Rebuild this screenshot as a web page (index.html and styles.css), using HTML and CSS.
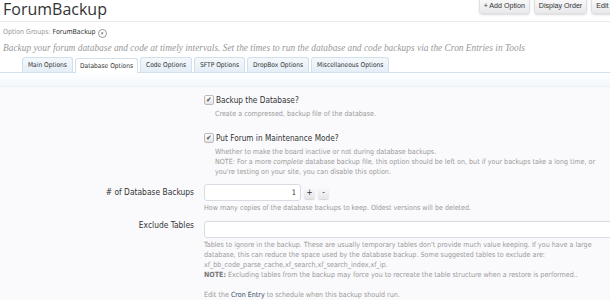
FILE: index.html
```html
<!DOCTYPE html>
<html lang="en">
<head>
  <meta charset="UTF-8" />
  <title>ForumBackup</title>
  <link rel="stylesheet" href="styles.css">
</head>
<body>
<div class="page">

 <div class="title-bar">
  <h1>ForumBackup</h1>
  <div class="top-ctrls">
    <a class="btn">+ Add Option</a>
    <a class="btn">Display Order</a>
    <a class="btn">Edit Option Group</a>
  </div>
 </div>

 <div class="breadcrumb">Option Groups: <b>ForumBackup</b> <span class="pop">&#9662;</span></div>
 <p class="group-desc">Backup your forum database and code at timely intervals. Set the times to run the database and code backups via the Cron Entries in Tools</p>

 <!-- TABS -->
 <ul class="tabs">
  <li>Main Options</li>
  <li class="active">Database Options</li>
  <li>Code Options</li>
  <li>SFTP Options</li>
  <li>DropBox Options</li>
  <li>Miscellaneous Options</li>
 </ul>
 <div class="tab-foot"></div>

 <div class="form">
  <div class="row row-check">
    <div class="label"></div>
    <div class="ctrl">
      <label class="check"><span class="box">&#10004;</span> Backup the Database?</label>
      <p class="hint">Create a compressed, backup file of the database.</p>
    </div>
  </div>

  <div class="row row-check2">
    <div class="label"></div>
    <div class="ctrl">
      <label class="check"><span class="box">&#10004;</span> Put Forum in Maintenance Mode?</label>
      <p class="hint">Whether to make the board inactive or not during database backups.<br>
      NOTE: For a more <i>complete</i> database backup file, this option should be left on, but if your backups take a long time, or you're testing on your site, you can disable this option.</p>
    </div>
  </div>

  <div class="row row-input">
    <div class="label field-label"># of Database Backups</div>
    <div class="ctrl">
      <div class="spin">
        <input class="txt num" type="text" value="1">
        <span class="spin-btn">+</span>
        <span class="spin-btn">-</span>
      </div>
      <p class="hint hint-flush">How many copies of the database backups to keep. Oldest versions will be deleted.</p>
    </div>
  </div>

  <div class="row">
    <div class="label field-label">Exclude Tables</div>
    <div class="ctrl">
      <input class="txt wide" type="text" value="">
      <p class="hint hint-flush">Tables to ignore in the backup. These are usually temporary tables don't provide much value keeping. If you have a large database, this can reduce the space used by the database backup. Some suggested tables to exclude are:<br>
      xf_bb_code_parse_cache,xf_search,xf_search_index,xf_ip.<br>
      <b>NOTE:</b> Excluding tables from the backup may force you to recreate the table structure when a restore is performed..</p>
      <p class="hint hint-flush hint-gap">Edit the <a class="lnk">Cron Entry</a> to schedule when this backup should run.</p>
    </div>
  </div>
 </div>

</div>
</body>
</html>
```

FILE: styles.css
```css
body {
  margin: 0;
  background: #fff;
  font-family: "DejaVu Sans Condensed", "DejaVu Sans", Tahoma, sans-serif;
  color: #333;
  overflow: hidden;
}
.page {
  width: 658px;
}

/* header */
.title-bar {
  display: flex;
  justify-content: space-between;
  align-items: flex-start;
  height: 21px;
  border-bottom: 1px solid #e6e9ee;
  padding-left: 3px;
}
h1 {
  margin: 0;
  font-family: "Open Sans", sans-serif;
  font-weight: normal;
  font-size: 16px;
  line-height: 19px;
  color: #333;
}
.top-ctrls {
  display: flex;
  gap: 4px;
  margin-top: -3px;
  white-space: nowrap;
}
.btn {
  display: block;
  padding: 3px 4px 2px;
  font-family: "Liberation Sans", Arial, sans-serif;
  font-size: 7.1px;
  line-height: 10px;
  color: #333;
  background: linear-gradient(#fafafa, #e9e9ec);
  border: 1px solid #e0e0e4;
  border-radius: 3px;
  box-shadow: 0 1px 2px rgba(0,0,0,0.15);
}

.breadcrumb {
  margin: 5px 0 0 3px;
  font-size: 7px;
  line-height: 10px;
  color: #999;
}
.breadcrumb b {
  font-weight: normal;
  color: #333;
}
.pop {
  display: inline-block;
  width: 7px;
  height: 7px;
  border: 1px solid #999;
  border-radius: 50%;
  font-size: 5px;
  line-height: 7px;
  text-align: center;
  color: #666;
  vertical-align: -1px;
}
.group-desc {
  margin: 4px 0 0 3px;
  font-family: "Liberation Serif", serif;
  font-style: italic;
  font-size: 9.4px;
  line-height: 12px;
  color: #999;
  white-space: nowrap;
}

/* tabs */
.tabs {
  display: flex;
  gap: 2px;
  list-style: none;
  margin: 3px 0 0;
  padding: 0 0 0 22px;
  height: 15px;
  border-bottom: 1px solid #d2dfec;
}
.tabs li {
  padding: 0 5px;
  font-size: 6.6px;
  line-height: 15px;
  color: #333;
  background: linear-gradient(#f3f8fc, #e5eef7);
  border: 1px solid #d2dfec;
  border-bottom: none;
  border-radius: 3px 3px 0 0;
}
.tabs li.active {
  background: #fff;
  position: relative;
  top: 1px;
  padding: 0 4px;
}
.tab-foot {
  height: 13px;
  background: linear-gradient(#fdfeff, #f4f8fb);
  border-bottom: 1px solid #eaf0f5;
}

/* form */
.form {
  background: #fafafc;
  padding-top: 8px;
  height: 300px;
}
.row {
  display: flex;
}
.row-check {
  margin-bottom: 14px;
}
.row-check2 {
  margin-bottom: 7px;
}
.row-input {
  margin-bottom: 4px;
}
.label {
  flex: 0 0 204px;
  padding-right: 10px;
  box-sizing: border-box;
  text-align: right;
}
.field-label {
  font-size: 8.4px;
  line-height: 17px;
  color: #333;
}
.ctrl {
  flex: 1;
}
.check {
  display: flex;
  align-items: center;
  gap: 2px;
  font-size: 8.2px;
  line-height: 10px;
  color: #333;
}
.box {
  display: inline-block;
  width: 8px;
  height: 8px;
  border: 1px solid #bbb;
  border-radius: 2px;
  background: linear-gradient(#fff, #e4e4e4);
  font-size: 7px;
  line-height: 8px;
  text-align: center;
  color: #444;
}
.hint {
  margin: 4px 0 0 11px;
  max-width: 395px;
  font-size: 7.1px;
  line-height: 10px;
  color: #999;
}
.hint-flush {
  margin: 2px 0 0;
  max-width: 410px;
}
.hint-gap {
  margin-top: 10px;
}
.hint b {
  color: #777;
}
.lnk {
  color: #2b485c;
}
.spin {
  display: flex;
  align-items: center;
  gap: 3px;
}
.txt {
  box-sizing: border-box;
  height: 17px;
  border: 1px solid #d8dce2;
  border-radius: 3px;
  background: #fff;
  font-family: "DejaVu Sans Condensed", "DejaVu Sans", sans-serif;
  font-size: 7.5px;
  color: #333;
  padding: 0 4px;
  margin: 0;
}
.num {
  width: 97px;
  text-align: right;
}
.wide {
  width: 460px;
}
.spin-btn {
  width: 11px;
  height: 12px;
  font-size: 8px;
  line-height: 12px;
  text-align: center;
  color: #333;
  background: linear-gradient(#fafafa, #e6e6ea);
  border-radius: 3px;
  box-shadow: 0 1px 1px rgba(0,0,0,0.15);
}
```
